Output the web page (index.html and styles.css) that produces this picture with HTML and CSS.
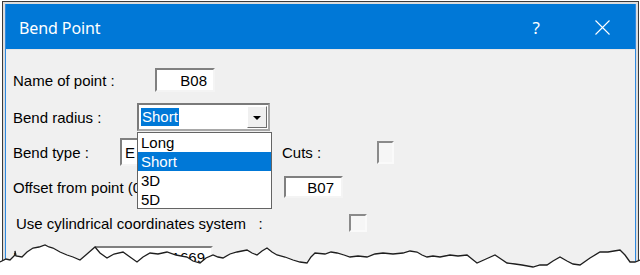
FILE: index.html
```html
<!DOCTYPE html>
<html lang="en">
<head>
<meta charset="UTF-8">
<title>Bend Point</title>
<link rel="stylesheet" href="styles.css">
</head>
<body>

<div class="frame">
  <div class="window">
    <div class="titlebar">
      <span class="title">Bend Point</span>
      <span class="help">?</span>
      <svg class="close" width="15" height="15" viewBox="0 0 15 15">
        <path d="M0.5 0.5 L14.5 14.5 M14.5 0.5 L0.5 14.5" stroke="#fff" stroke-width="1.1" fill="none"/>
      </svg>
    </div>

    <div class="content">
      <div class="row r1">
        <span class="label w-name">Name of point :</span>
        <div class="field name-field">B08</div>
      </div>

      <div class="row r2">
        <span class="label w-radius">Bend radius :</span>
        <div class="combo">
          <span class="sel">Short</span>
          <span class="drop-btn"><span class="arrow"></span></span>
        </div>
      </div>

      <div class="row r3">
        <span class="label w-type">Bend type :</span>
        <div class="field type-field">E</div>
        <span class="label w-cuts">Cuts :</span>
        <span class="check"></span>
      </div>

      <div class="row r4">
        <span class="label w-offset">Offset from point (0 = none) :</span>
        <div class="field offset-field">B07</div>
      </div>

      <div class="row r5">
        <span class="label w-cyl">Use cylindrical coordinates system&nbsp;&nbsp;&nbsp;:</span>
        <span class="check"></span>
      </div>

      <div class="row r6">
        <span class="label w-len">Length :</span>
        <div class="field len-field">3.1669</div>
      </div>

      <!-- open list of the bend radius combo -->
      <div class="drop-list">
        <div class="item">Long</div>
        <div class="item active">Short</div>
        <div class="item">3D</div>
        <div class="item">5D</div>
      </div>
    </div>
  </div>
</div>

<svg class="torn" width="640" height="35" viewBox="0 0 640 35">
  <path d="M0 22 L6 19 L10 20 L15 15 L15 11 L16 16 L22 17 L27 12 L33 8 L39 7 L45 5 L49 7 L53 8 L60 12 L67 15 L73 17 L80 20 L87 14 L95 7 L100 13 L107 18 L114 14 L123 12 L130 17 L137 22 L143 17 L150 13 L158 14 L167 12 L176 15 L187 17 L193 21 L200 23 L206 18 L213 15 L218 17 L223 18 L230 14 L237 12 L242 11 L247 10 L252 13 L257 15 L262 11 L267 8 L272 12 L277 15 L285 17 L293 20 L300 22 L307 23 L311 17 L315 13 L325 14 L331 12 L337 13 L344 15 L350 17 L358 16 L367 17 L375 14 L383 13 L393 14 L403 13 L410 11 L417 12 L422 15 L427 17 L433 16 L440 17 L450 15 L458 16 L467 15 L472 19 L477 23 L486 19 L495 15 L501 19 L507 23 L515 24 L522 25 L533 27 L540 25 L547 25 L553 21 L560 17 L567 21 L573 24 L580 25 L590 18 L600 12 L608 12 L614 11 L620 10 L625 15 L630 22 L635 22 L640 20 L640 35 L0 35 Z" fill="#fff"/>
  <path d="M0 22 L6 19 L10 20 L15 15 L15 11 L16 16 L22 17 L27 12 L33 8 L39 7 L45 5 L49 7 L53 8 L60 12 L67 15 L73 17 L80 20 L87 14 L95 7 L100 13 L107 18 L114 14 L123 12 L130 17 L137 22 L143 17 L150 13 L158 14 L167 12 L176 15 L187 17 L193 21 L200 23 L206 18 L213 15 L218 17 L223 18 L230 14 L237 12 L242 11 L247 10 L252 13 L257 15 L262 11 L267 8 L272 12 L277 15 L285 17 L293 20 L300 22 L307 23 L311 17 L315 13 L325 14 L331 12 L337 13 L344 15 L350 17 L358 16 L367 17 L375 14 L383 13 L393 14 L403 13 L410 11 L417 12 L422 15 L427 17 L433 16 L440 17 L450 15 L458 16 L467 15 L472 19 L477 23 L486 19 L495 15 L501 19 L507 23 L515 24 L522 25 L533 27 L540 25 L547 25 L553 21 L560 17 L567 21 L573 24 L580 25 L590 18 L600 12 L608 12 L614 11 L620 10 L625 15 L630 22 L635 22 L640 20" fill="none" stroke="#1e1e1e" stroke-width="1.3"/>
</svg>

</body>
</html>
```

FILE: styles.css
```css
body {
  margin: 0;
  background-color: #fff;
  font-family: 'Liberation Sans', Arial, sans-serif;
  color: #000;
  overflow: hidden;
  position: relative;
  height: 275px;
}
.frame {
  margin: 1px 0 0 2px;
  width: 637px;
  height: 274px;
  box-sizing: border-box;
  border: 1px solid #3a3a3a;
  border-bottom: none;
  padding: 2px 2px 0;
  background-color: #dcdcdc;
  overflow: hidden;
}
.window {
  height: 100%;
  border-left: 1px solid #2f8ae0;
  border-right: 1px solid #2f8ae0;
  background-color: #f0f0f0;
}
.titlebar {
  height: 45px;
  background-color: #0078d7;
  display: flex;
  align-items: center;
  padding: 2px 25px 0 13px;
  box-sizing: border-box;
  color: #fff;
  font-family: 'Noto Sans', 'Open Sans', sans-serif;
  font-size: 16px;
}
.title {
  letter-spacing: -0.1px;
}
.help {
  margin-left: auto;
  font-size: 17px;
}
.close {
  margin-left: 55px;
}
.content {
  position: relative;
  padding: 18px 0 0 7px;
  border-top: 1px solid #e6e6e6;
  font-size: 15px;
}
.row {
  display: flex;
  align-items: center;
}
.label {
  flex-shrink: 0;
  white-space: nowrap;
  overflow: hidden;
}
.r1 { height: 24px; }
.r2 { height: 28px; margin-top: 11px; }
.r3 { height: 28px; margin-top: 7px; }
.r4 { height: 22px; margin-top: 10px; }
.r5 { height: 18px; margin-top: 16px; padding-left: 3px; }
.r6 { height: 22px; margin-top: 14px; }

.w-name { width: 142px; }
.w-radius { width: 124px; }
.w-type { width: 107px; }
.w-cuts { width: 95px; margin-left: 12px; }
/* the open list covers the rest of this label */
.w-offset { width: 124px; margin-right: 147px; }
.w-cyl { width: 333px; }
.w-len { width: 82px; }

.field {
  box-sizing: border-box;
  height: 100%;
  background-color: #fff;
  border: 2px solid;
  border-color: #808080 #f4f4f4 #f4f4f4 #808080;
  display: flex;
  align-items: center;
  justify-content: flex-end;
  padding-right: 6px;
}
.name-field { width: 60px; }
.offset-field { width: 59px; padding-right: 7px; }
.len-field { width: 118px; }
.type-field {
  width: 150px;
  justify-content: flex-start;
  padding-left: 3px;
}

.combo {
  box-sizing: border-box;
  width: 133px;
  height: 100%;
  background-color: #fff;
  border: 2px solid;
  border-color: #7a7a7a #a8a8a8 #a8a8a8 #7a7a7a;
  display: flex;
  align-items: center;
  padding-left: 2px;
}
.sel {
  background-color: #0078d7;
  color: #fff;
  line-height: 18px;
  padding: 0 1px;
}
.drop-btn {
  margin-left: auto;
  margin-right: 1px;
  width: 20px;
  height: 22px;
  box-sizing: border-box;
  background-color: #f0f0f0;
  border: 1px solid;
  border-color: #fff #6e6e6e #6e6e6e #fff;
  display: flex;
  align-items: center;
  justify-content: center;
}
.arrow {
  width: 0;
  height: 0;
  border-left: 4px solid transparent;
  border-right: 4px solid transparent;
  border-top: 4px solid #000;
  margin-top: 2px;
}

.check {
  box-sizing: border-box;
  width: 18px;
  height: 18px;
  background-color: #f6f6f6;
  border: 2px solid;
  border-color: #8a8a8a #fafafa #fafafa #8a8a8a;
}
.r3 .check {
  width: 17px;
  height: 23px;
}

.drop-list {
  position: absolute;
  left: 131px;
  top: 82px;
  width: 135px;
  height: 77px;
  box-sizing: border-box;
  border: 1px solid #646464;
  background-color: #fff;
}
.item {
  height: 19px;
  line-height: 19px;
  padding-left: 3px;
}
.item.active {
  background-color: #0078d7;
  color: #fff;
}

.torn {
  position: absolute;
  left: 0;
  top: 240px;
}
```
